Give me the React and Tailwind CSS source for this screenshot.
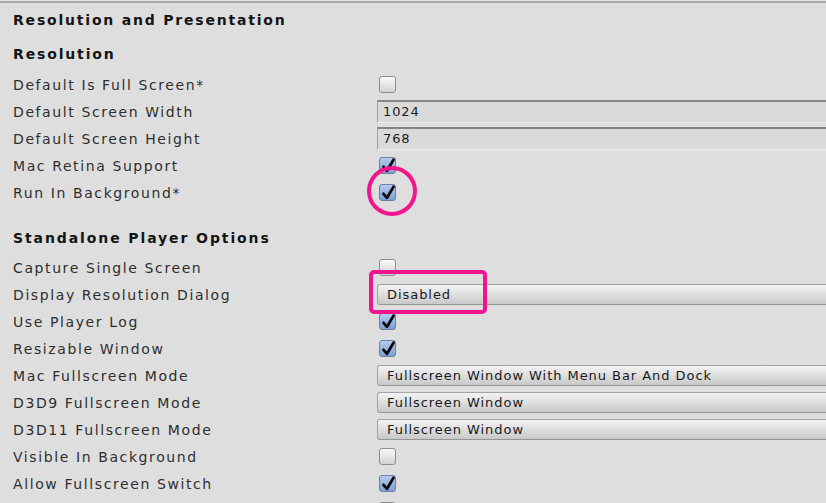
import React from 'react';

const font = { fontFamily: '"DejaVu Sans", Verdana, sans-serif' };

const Check = ({ checked }) => (
  <div
    className={
      checked
        ? 'relative ml-[2px] h-[17px] w-[17px] rounded-[3px] border border-[#6d7f9c] bg-gradient-to-b from-[#b4cbf0] to-[#7d9fd4]'
        : 'relative ml-[2px] h-[17px] w-[17px] rounded-[3px] border border-[#8e8e8e] bg-gradient-to-b from-[#fbfbfb] to-[#d2d2d2]'
    }
  >
    {checked && (
      <svg className="absolute left-0 top-0 overflow-visible" width="17" height="17" viewBox="0 0 17 17">
        <path d="M3.5 8.8 L7 12.8 L13.6 1.6" fill="none" stroke="#0a0a0a" strokeWidth="2.8" strokeLinecap="round" strokeLinejoin="round" />
      </svg>
    )}
  </div>
);

const Field = ({ value }) => (
  <div className="flex h-[23px] w-full items-center border border-[#a2a2a2] border-t-2 border-t-[#858585] border-b-[#eeeeee] bg-[#dadada] pl-[5px] text-[13px] tracking-[0.9px] text-[#1c1c1c]">
    {value}
  </div>
);

const Dropdown = ({ value }) => (
  <div className="flex h-[21px] w-full items-center rounded-l-[3px] border border-[#a3a3a3] border-b-[#949494] bg-gradient-to-b from-[#f3f3f3] to-[#c9c9c9] pl-[9px] text-[13px] tracking-[0.95px] text-[#1a1a1a]">
    {value}
  </div>
);

const Row = ({ label, children }) => (
  <div className="flex h-[27px] items-center">
    <div className="w-[377px] shrink-0 pl-[13px] pt-[2px] text-[14px] tracking-[1.6px] text-[#2e2e2e]">{label}</div>
    <div className="flex flex-1 items-center">{children}</div>
  </div>
);

export default function App() {
  return (
    <div style={font} className="relative h-[503px] w-[826px] overflow-hidden bg-[#dedede]">
      <div className="h-[3px] border-b-2 border-[#a9a9a9] bg-[#e4e4e4]" />
      <div className="flex h-[35px] items-center pl-[13px] text-[14px] font-bold tracking-[1.8px] text-[#141414]">
        Resolution and Presentation
      </div>
      <div className="w-[900px]">
        <div className="flex h-[33px] items-center pl-[13px] text-[14px] font-bold tracking-[1.85px] text-[#141414]">Resolution</div>
        <Row label="Default Is Full Screen*"><Check /></Row>
        <Row label="Default Screen Width"><Field value="1024" /></Row>
        <Row label="Default Screen Height"><Field value="768" /></Row>
        <Row label="Mac Retina Support"><Check checked /></Row>
        <Row label="Run In Background*"><Check checked /></Row>

        <div className="h-[48px] pl-[13px] pt-[24px] text-[14px] font-bold leading-[16px] tracking-[1.9px] text-[#141414]">
          Standalone Player Options
        </div>
        <Row label="Capture Single Screen"><Check /></Row>
        <Row label="Display Resolution Dialog"><Dropdown value="Disabled" /></Row>
        <Row label="Use Player Log"><Check checked /></Row>
        <Row label="Resizable Window"><Check checked /></Row>
        <Row label="Mac Fullscreen Mode"><Dropdown value="Fullscreen Window With Menu Bar And Dock" /></Row>
        <Row label="D3D9 Fullscreen Mode"><Dropdown value="Fullscreen Window" /></Row>
        <Row label="D3D11 Fullscreen Mode"><Dropdown value="Fullscreen Window" /></Row>
        <Row label="Visible In Background"><Check /></Row>
        <Row label="Allow Fullscreen Switch"><Check checked /></Row>
        <Row label=""><Check /></Row>
      </div>

      {/* annotations */}
      <div className="absolute left-[367px] top-[166px] h-[50px] w-[50px] rounded-full border-[4px] border-[#f0158c]" />
      <div className="absolute left-[369px] top-[270px] h-[44px] w-[118px] rounded-[5px] border-[4px] border-[#f0158c]" />
    </div>
  );
}
